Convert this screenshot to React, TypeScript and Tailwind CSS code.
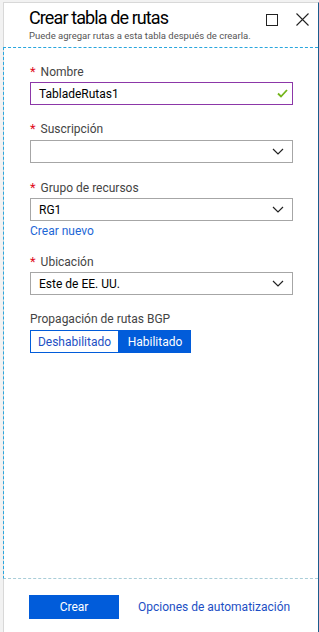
import React from "react";

const font = { fontFamily: 'Roboto, "Noto Sans", sans-serif' };

function Chevron() {
  return (
    <svg width="12" height="7" viewBox="0 0 12 7" className="shrink-0">
      <path d="M1 1 L6 6 L11 1" fill="none" stroke="#222" strokeWidth="1.2" />
    </svg>
  );
}

function Label({ text, required = true }: { text: string; required?: boolean }) {
  return (
    <div className="flex items-center h-[16px] pt-[3px] text-[12px] text-[#444] leading-none">
      {required && <span className="text-[#e00b1c] mr-[5px] text-[13px]">*</span>}
      <span>{text}</span>
    </div>
  );
}

function Select({ value }: { value?: string }) {
  return (
    <div className="h-[23px] border border-[#a6a6a6] flex items-center justify-between pl-[8px] pr-[8px] text-[12px] text-black">
      <span>{value ?? ""}</span>
      <Chevron />
    </div>
  );
}

export default function App() {
  return (
    <div className="w-[319px] h-[632px] bg-[#f2f2f2] pt-[2px] pl-[3px] overflow-hidden" style={font}>
      <div className="h-full bg-white border-t border-l border-[#d8d8d8] border-r border-r-[#1b5d8e] flex flex-col">
        {/* header */}
        <div className="h-[44px] flex items-start pl-[25px] pr-[9px] shrink-0">
          <div className="flex-1 pt-[3px]">
            <div className="text-[18px] leading-[24px] tracking-[-0.9px] text-black">Crear tabla de rutas</div>
            <div className="text-[9.5px] leading-[12px] text-[#555]">
              Puede agregar rutas a esta tabla después de crearla.
            </div>
          </div>
          <div className="flex items-center gap-[18px] pt-[10px]">
            <div className="w-[12px] h-[12px] border border-[#222]" />
            <svg width="13" height="13" viewBox="0 0 13 13">
              <path d="M0.5 0.5 L12.5 12.5 M12.5 0.5 L0.5 12.5" stroke="#222" strokeWidth="1.1" />
            </svg>
          </div>
        </div>

        {/* content */}
        <div className="flex-1 -ml-px border-l border-t border-dashed border-l-[#29a6de] border-t-[#29a6de] border-b border-b-[#a9cdd8] pl-[26px] pr-[25px] pt-[14px]">
          <Label text="Nombre" />
          <div className="mt-[4px] h-[23px] border border-[#8c37a8] flex items-center justify-between pl-[8px] pr-[4px] text-[12px] text-black">
            <span>TabladeRutas1</span>
            <svg width="11" height="9" viewBox="0 0 11 9">
              <path d="M1 4.5 L4 7.5 L10 1" fill="none" stroke="#74b51b" strokeWidth="1.8" />
            </svg>
          </div>

          <div className="mt-[14px]">
            <Label text="Suscripción" />
          </div>
          <div className="mt-[5px]">
            <Select />
          </div>

          <div className="mt-[15px]">
            <Label text="Grupo de recursos" />
          </div>
          <div className="mt-[4px]">
            <Select value="RG1" />
          </div>
          <div className="text-[12px] leading-[16px] text-[#1d67d6] mt-[2px]">Crear nuevo</div>

          <div className="mt-[13px]">
            <Label text="Ubicación" />
          </div>
          <div className="mt-[4px]">
            <Select value="Este de EE. UU." />
          </div>

          <div className="mt-[14px]">
            <Label text="Propagación de rutas BGP" required={false} />
          </div>
          <div className="mt-[5px] flex">
            <div className="h-[23px] w-[89px] border border-[#015cda] flex items-center justify-center text-[12px] text-[#1d4fc4]">
              Deshabilitado
            </div>
            <div className="h-[23px] w-[72px] bg-[#015cda] flex items-center justify-center text-[12px] text-white">
              Habilitado
            </div>
          </div>
        </div>

        {/* footer */}
        <div className="h-[53px] shrink-0 flex items-start pl-[25px] pt-[16px] gap-[19px]">
          <div className="h-[24px] w-[90px] bg-[#015cda] flex items-center justify-center text-[12px] text-white">
            Crear
          </div>
          <div className="text-[12px] leading-[24px] text-[#1d4fc4]">Opciones de automatización</div>
        </div>
      </div>
    </div>
  );
}
